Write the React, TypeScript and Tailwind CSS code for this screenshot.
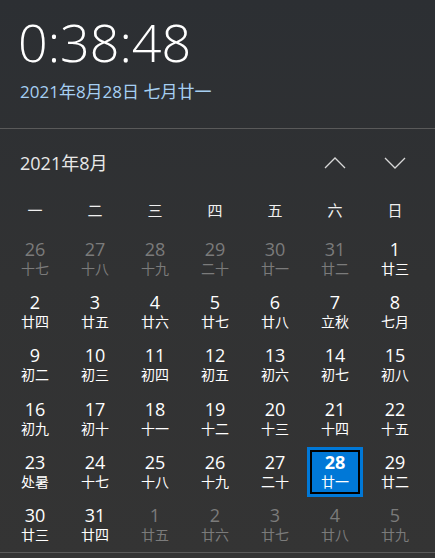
import React from "react";

type Day = { d: number; l: string; dim?: boolean; sel?: boolean };

const rows: Day[][] = [
  [
    { d: 26, l: "十七", dim: true },
    { d: 27, l: "十八", dim: true },
    { d: 28, l: "十九", dim: true },
    { d: 29, l: "二十", dim: true },
    { d: 30, l: "廿一", dim: true },
    { d: 31, l: "廿二", dim: true },
    { d: 1, l: "廿三" },
  ],
  [
    { d: 2, l: "廿四" },
    { d: 3, l: "廿五" },
    { d: 4, l: "廿六" },
    { d: 5, l: "廿七" },
    { d: 6, l: "廿八" },
    { d: 7, l: "立秋" },
    { d: 8, l: "七月" },
  ],
  [
    { d: 9, l: "初二" },
    { d: 10, l: "初三" },
    { d: 11, l: "初四" },
    { d: 12, l: "初五" },
    { d: 13, l: "初六" },
    { d: 14, l: "初七" },
    { d: 15, l: "初八" },
  ],
  [
    { d: 16, l: "初九" },
    { d: 17, l: "初十" },
    { d: 18, l: "十一" },
    { d: 19, l: "十二" },
    { d: 20, l: "十三" },
    { d: 21, l: "十四" },
    { d: 22, l: "十五" },
  ],
  [
    { d: 23, l: "处暑" },
    { d: 24, l: "十七" },
    { d: 25, l: "十八" },
    { d: 26, l: "十九" },
    { d: 27, l: "二十" },
    { d: 28, l: "廿一", sel: true },
    { d: 29, l: "廿二" },
  ],
  [
    { d: 30, l: "廿三" },
    { d: 31, l: "廿四" },
    { d: 1, l: "廿五", dim: true },
    { d: 2, l: "廿六", dim: true },
    { d: 3, l: "廿七", dim: true },
    { d: 4, l: "廿八", dim: true },
    { d: 5, l: "廿九", dim: true },
  ],
];

const weekdays = ["一", "二", "三", "四", "五", "六", "日"];

const FONT = "font-['Open_Sans','Noto_Sans_CJK_SC',sans-serif]";

function Chevron({ up }: { up?: boolean }) {
  return (
    <svg width="22" height="12" viewBox="0 0 22 12" fill="none">
      <path
        d={up ? "M1 11 L11 1 L21 11" : "M1 1 L11 11 L21 1"}
        stroke="#d8d8d8"
        strokeWidth="1.3"
      />
    </svg>
  );
}

export default function App() {
  return (
    <div
      className={`w-[435px] h-[558px] overflow-hidden bg-gradient-to-b from-[#2c2f33] via-[#313233] to-[#343434] text-white ${FONT}`}
    >
      <div className="h-[128px] pl-[18px] pt-[12px] flex flex-col">
        <div className="text-[52px] leading-[60px] font-light text-white">
          0:38:48
        </div>
        <div className="mt-[9px] text-[17px] leading-[22px] text-[#a6cff2] pl-[2px]">
          2021年8月28日 七月廿一
        </div>
      </div>
      <div className="h-px bg-[#5a5a5a]" />
      <div className="h-[68px] flex items-center pl-[20px] pr-[10px]">
        <div className="flex-1 text-[18px] text-[#e8e8e8]">2021年8月</div>
        <div className="w-[60px] flex justify-center">
          <Chevron up />
        </div>
        <div className="w-[60px] flex justify-center">
          <Chevron />
        </div>
      </div>
      <div className="pl-[5px] pr-[10px] grid grid-cols-7 h-[26px] items-center">
        {weekdays.map((w) => (
          <div key={w} className="text-center text-[15px] text-[#f0f0f0]">
            {w}
          </div>
        ))}
      </div>
      <div className="h-[10px]" />
      <div className="pl-[5px] pr-[10px] grid grid-cols-7 grid-rows-6 h-[320px] border-b border-[#5a5a5a]">
        {rows.flat().map((c, i) => (
          <div key={i} className="flex items-center justify-center">
            {c.sel ? (
              <div className="w-[56px] h-[50px] border-[3px] border-[#0078d7]">
                <div className="w-full h-full border-[2px] border-black bg-[#0078d7] flex flex-col items-center justify-center">
                  <div className="text-[18px] leading-[19px] font-bold text-white">
                    {c.d}
                  </div>
                  <div className="text-[14px] leading-[20px] text-white">{c.l}</div>
                </div>
              </div>
            ) : (
              <div
                className={`flex flex-col items-center ${
                  c.dim ? "text-[#7b7b7b]" : "text-white"
                }`}
              >
                <div className="text-[18px] leading-[19px]">{c.d}</div>
                <div className="text-[14px] leading-[20px]">{c.l}</div>
              </div>
            )}
          </div>
        ))}
      </div>
    </div>
  );
}
